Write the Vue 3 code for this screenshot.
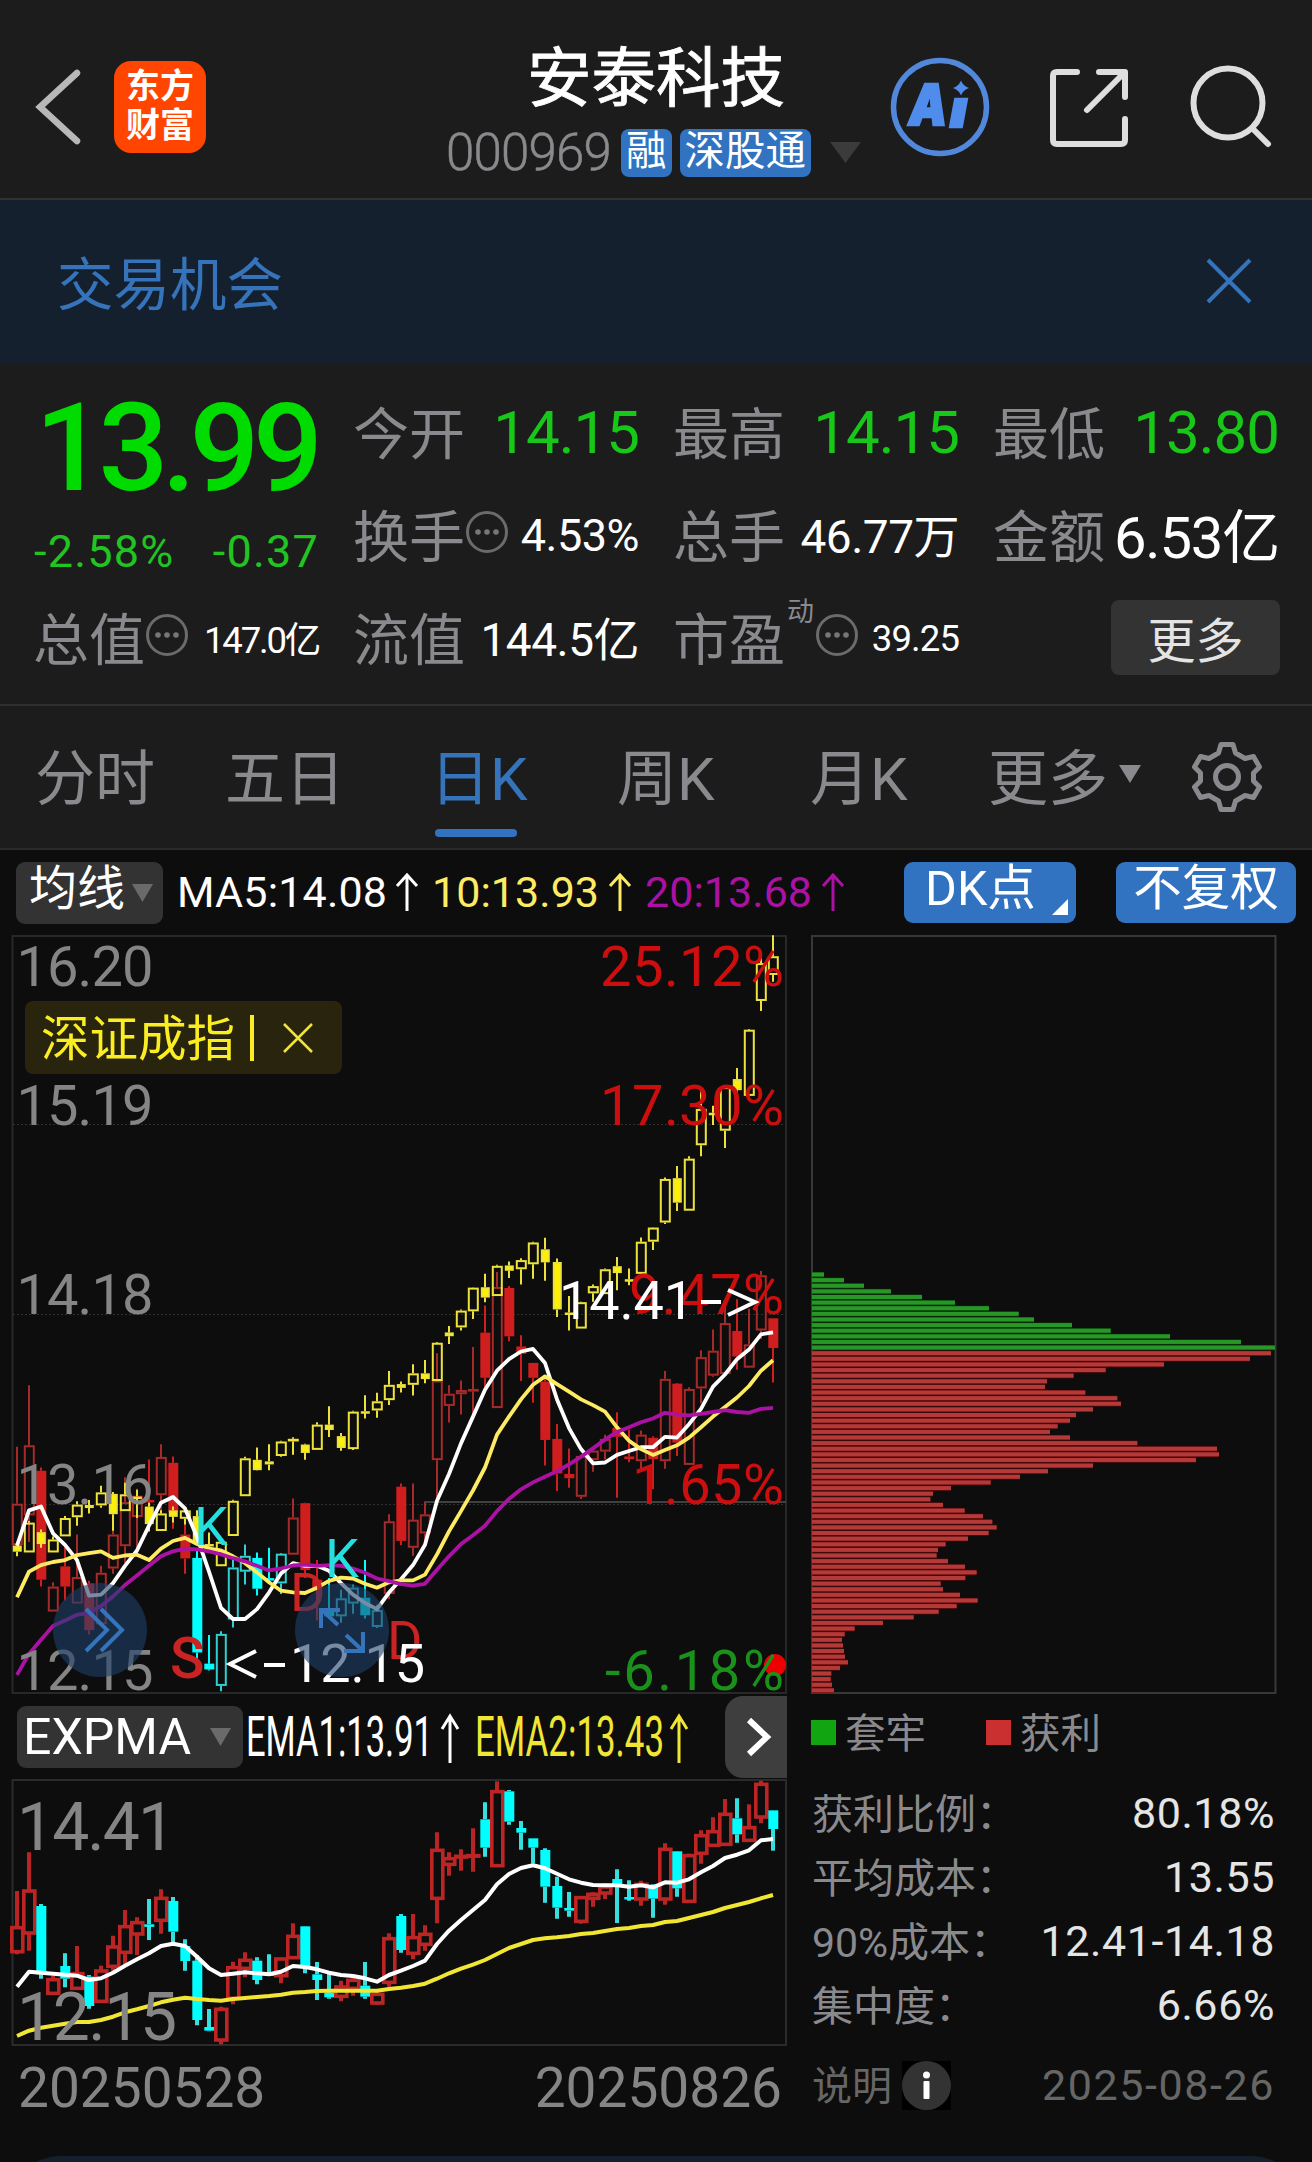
<template>
  <div class="page">
    <header class="header">
      <svg class="back" width="50" height="80" viewBox="0 0 50 80">
        <path d="M44 6 L7 40 L44 74" fill="none" stroke="#b8b8b8" stroke-width="6.500" stroke-linecap="round" />
      </svg>
      <div class="logo"><span>东方</span><span>财富</span></div>
      <div class="stock">
        <h1>安泰科技</h1>
        <div class="stock-sub">
          <span class="code">000969</span>
          <span class="tag">融</span>
          <span class="tag">深股通</span>
          <svg width="32" height="22" viewBox="0 0 32 22"><path d="M0 0 H31 L15.500 21 Z" fill="#3b3b3b" /></svg>
        </div>
      </div>
      <div class="header-icons">
        <svg width="100" height="100" viewBox="0 0 100 100">
          <circle cx="50" cy="50" r="46.500" fill="none" stroke="#5188dc" stroke-width="5.500" />
          <g fill="#508cec" stroke="#508cec" stroke-width="2.500" font-family="Inter" font-weight="900" font-style="italic">
            <text x="19" y="67.500" font-size="57" textLength="38" lengthAdjust="spacingAndGlyphs">A</text>
            <text x="60" y="70" font-size="52" textLength="17" lengthAdjust="spacingAndGlyphs">ı</text>
          </g>
          <path d="M71 23.500 Q73 29 79 31 Q73 33 71 38.500 Q69 33 63 31 Q69 29 71 23.500 Z" fill="#508cec" />
        </svg>
        <svg width="80" height="80" viewBox="0 0 80 80" fill="none" stroke="#dedede" stroke-width="6" stroke-linecap="round" stroke-linejoin="round">
          <path d="M28 5 H8 Q4 5 4 9 V73 Q4 77 8 77 H72 Q76 77 76 73 V52" />
          <path d="M50 5 H76 V30 M74 7 L38 43" />
        </svg>
        <svg width="84" height="84" viewBox="0 0 84 84" fill="none" stroke="#dedede" stroke-width="6" stroke-linecap="round">
          <circle cx="38" cy="38" r="34.500" />
          <path d="M63 64 L78 79" />
        </svg>
      </div>
    </header>

    <div v-if="bannerOpen" class="banner">
      <span>交易机会</span>
      <svg width="46" height="46" viewBox="0 0 46 46" @click="bannerOpen = false">
        <path d="M2 2 L44 44 M44 2 L2 44" stroke="#3573bb" stroke-width="4" />
      </svg>
    </div>

    <section class="quote">
      <div class="price">
        <div class="price-now">13.99</div>
        <div class="price-diff"><span>-2.58%</span><span>-0.37</span></div>
      </div>
      <div v-for="item in quotes" :key="item.label" class="cell">
        <span class="cell-label">{{ item.label }}</span>
        <sup v-if="item.sup">{{ item.sup }}</sup>
        <svg v-if="item.dots" class="dots" :class="{ shifted: item.sup }" width="44" height="44" viewBox="0 0 44 44">
          <circle cx="22" cy="22" r="19.500" fill="none" stroke="#6b6b6b" stroke-width="3" />
          <circle v-for="x in [13, 22, 31]" :key="x" :cx="x" cy="22" r="2.800" fill="#77777b" />
        </svg>
        <span class="cell-value" :class="item.cls">{{ item.value }}</span>
      </div>
      <div class="cell"><button class="more">更多</button></div>
    </section>

    <nav class="tabs">
      <div
        v-for="tab in tabs"
        :key="tab"
        class="tab"
        :class="{ active: tab === activeTab }"
        @click="activeTab = tab"
      >
        {{ tab }}
        <svg v-if="tab === '更多'" width="22" height="18" viewBox="0 0 22 18"><path d="M0 0 H22 L11 18 Z" fill="#8a8a8e" /></svg>
      </div>
      <svg class="gear" width="72" height="72" viewBox="0 0 72 72" fill="none" stroke="#8a8a8e" stroke-width="5" stroke-linejoin="round">
        <path d="M30 3.500 H42 L44.500 12 L54 17.500 L62.500 15.500 L68.500 26 L62.500 32 V40 L68.500 46 L62.500 56.500 L54 54.500 L44.500 60 L42 68.500 H30 L27.500 60 L18 54.500 L9.500 56.500 L3.500 46 L9.500 40 V32 L3.500 26 L9.500 15.500 L18 17.500 L27.500 12 Z" />
        <circle cx="36" cy="36" r="11.500" />
      </svg>
    </nav>

    <main class="charts">
      <div class="toolbar">
        <button class="picker"><span>均线</span><svg width="21" height="18" viewBox="0 0 21 18"><path d="M0 0 H21 L10.500 18 Z" fill="#6a6a6a" /></svg></button>
        <svg class="ma" width="680" height="60" viewBox="176 861 680 60" font-size="43">
          <g v-for="m in averages" :key="m.text" :fill="m.color" :stroke="m.color">
            <text :x="m.x" y="904.500" :textLength="m.w" stroke="none">{{ m.text }}</text>
            <path :d="`M${m.arrow} 909 V874 M${m.arrow - 10} 884 L${m.arrow} 873 L${m.arrow + 10} 884`" fill="none" stroke-width="3" />
          </g>
        </svg>
        <button class="blue dk"><span>DK点</span><i></i></button>
        <button class="blue"><span>不复权</span></button>
      </div>

      <div class="columns">
        <div class="left">
          <svg class="kline" width="787" height="760" viewBox="0 935 787 760">
            <g fill="none" stroke="#303030">
              <rect x="12.500" y="936" width="773.500" height="757" stroke="#282828" stroke-width="2" />
              <path v-for="y in [1124.5, 1314.5, 1504.5]" :key="y" :d="`M13 ${y} H786`" stroke-dasharray="2 2" />
              <path d="M425 1502 H786" stroke="#404040" stroke-width="2" />
            </g>
            <g v-for="(c, i) in stock" :key="'s' + i" :stroke="mainColor(c, i)" :fill="mainColor(c, i)" stroke-width="2">
              <path :d="wick(i, c, mainY)" />
              <rect v-bind="body(i, c, mainY, 10, 9)" :fill="c[0] ? 'none' : mainColor(c, i)" />
            </g>
            <g v-for="(c, i) in index" :key="'i' + i" stroke="#ede23c" stroke-width="2">
              <path :d="wick(i, c, indexY)" />
              <rect v-bind="body(i, c, indexY, 10, 8)" :fill="c[0] ? 'none' : '#fff000'" />
            </g>
            <g fill="none" stroke-width="3.800" stroke-linejoin="round">
              <polyline :points="line(ma5, indexY)" stroke="#ffffff" />
              <polyline :points="line(ma10, indexY)" stroke="#fdeb64" />
              <polyline :points="line(ma20, indexY)" stroke="#ab12a4" />
            </g>
            <circle cx="775" cy="1665" r="11" fill="#ee0000" />
            <g font-size="56">
              <template v-for="a in axis" :key="a.price">
                <text x="16.500" :y="a.y" textLength="137" fill="#858585">{{ a.price }}</text>
                <text :x="a.x" :y="a.y" :textLength="784 - a.x" :fill="a.color">{{ a.pct }}</text>
              </template>
            </g>
            <g font-size="54">
              <g fill="#c92323">
                <text x="170" y="1678" font-size="57" font-weight="500">S</text>
                <text x="290" y="1611">D</text>
                <text x="387" y="1659">D</text>
              </g>
              <g fill="#25dede">
                <text x="194" y="1545">K</text>
                <text x="325" y="1577">K</text>
              </g>
              <g fill="#ffffff">
                <text x="559" y="1319" textLength="135">14.41</text>
                <text x="290" y="1682" textLength="135">12.15</text>
              </g>
              <path d="M701 1302 H721 M728 1290 L755 1302 L728 1315 M285 1665 H264 M256 1651 L230 1664 L256 1677" fill="none" stroke="#fff" stroke-width="4" />
            </g>
            <g fill="none" stroke="#3573bb" stroke-width="4">
              <circle cx="100" cy="1630" r="47" fill="#203f6a" fill-opacity="0.6" stroke="none" />
              <path d="M86 1609 L107 1630 L86 1651 M101 1609 L122 1630 L101 1651" />
              <circle cx="342" cy="1630" r="47" fill="#203f6a" fill-opacity="0.6" stroke="none" />
              <path d="M338 1625 L322 1610 M340 1610 H321 V1628 M346 1635 L362 1650 M363 1632 V1651 H344" />
            </g>
          </svg>
          <div class="overlay"><span>深证成指</span><i></i>
            <svg width="32" height="32" viewBox="0 0 32 32"><path d="M2 2 L30 30 M30 2 L2 30" stroke="#efe43a" stroke-width="2.500" /></svg>
          </div>

          <div class="expma">
            <button class="picker wide">EXPMA <svg width="21" height="18" viewBox="0 0 21 18"><path d="M0 0 H21 L10.500 18 Z" fill="#6a6a6a" /></svg></button>
            <svg width="470" height="70" viewBox="245 1700 470 70" font-size="55">
              <g v-for="m in emas" :key="m.text" :fill="m.color" :stroke="m.color">
                <text :x="m.x" y="1754" :textLength="m.w" lengthAdjust="spacingAndGlyphs" stroke="none">{{ m.text }}</text>
                <path :d="`M${m.arrow} 1761 V1715 M${m.arrow - 8} 1727 L${m.arrow} 1714 L${m.arrow + 8} 1727`" fill="none" stroke-width="3" />
              </g>
            </svg>
            <button class="next">
              <svg width="30" height="44" viewBox="0 0 30 44"><path d="M6 5 L24 22 L6 39" fill="none" stroke="#fff" stroke-width="6" /></svg>
            </button>
          </div>

          <svg class="kline" width="787" height="268" viewBox="0 1779 787 268">
            <rect x="12.500" y="1780" width="773.500" height="265" fill="none" stroke="#2b2b2b" stroke-width="2" />
            <g v-for="(c, i) in stock" :key="i" :stroke="c[0] ? '#b82424' : '#38dede'" stroke-width="4">
              <path :d="wick(i, c, subY)" />
              <rect v-bind="body(i, c, subY, 12, 9)" :fill="c[0] ? 'none' : '#00ffff'" :stroke="c[0] ? '#bd2424' : '#00ffff'" :stroke-width="c[0] ? 3.6 : 2" />
            </g>
            <g fill="none" stroke-width="4" stroke-linejoin="round">
              <polyline :points="line(ema1, subY)" stroke="#ffffff" />
              <polyline :points="line(ema2, subY)" stroke="#f2e635" />
            </g>
            <g font-size="66" fill="#858585">
              <text x="17" y="1850" textLength="158">14.41</text>
              <text x="17" y="2040" textLength="160">12.15</text>
            </g>
          </svg>
          <div class="dates"><span>20250528</span><span>20250826</span></div>
        </div>

        <aside class="right">
          <svg width="466" height="760" viewBox="811 935 466 760">
            <rect x="812" y="936" width="463.500" height="757" fill="none" stroke="#383838" stroke-width="2" />
            <g v-for="(w, i) in chips" :key="i">
              <rect x="812" :y="1272 + i * 5.62" :width="w / 3" height="5.200" :fill="i < 14 ? '#064406' : '#620a0a'" />
              <rect x="812" :y="1272.5 + i * 5.62" :width="w / 3" height="4" :fill="i < 14 ? '#289728' : '#b43a3a'" />
            </g>
          </svg>
          <div class="legend">
            <span class="locked">套牢</span>
            <span class="profit">获利</span>
          </div>
          <dl>
            <div v-for="row in costs" :key="row[0]"><dt>{{ row[0] }}</dt><dd>{{ row[1] }}</dd></div>
          </dl>
          <div class="note">
            <span class="note-label">说明</span>
            <svg width="49" height="49" viewBox="0 0 49 49">
              <rect width="49" height="49" fill="#000" />
              <circle cx="24.500" cy="24.500" r="24.500" fill="#333" />
              <circle cx="24.500" cy="14" r="3.500" fill="#fff" />
              <rect x="21.500" y="20" width="6" height="18" rx="1" fill="#fff" />
            </svg>
            <span class="note-date">2025-08-26</span>
          </div>
        </aside>
      </div>
      <div class="sheet"></div>
    </main>
  </div>
</template>

<script setup>
import { ref } from 'vue'

const bannerOpen = ref(true)
const activeTab = ref('日K')
const tabs = ['分时', '五日', '日K', '周K', '月K', '更多']

const quotes = [
  { label: '今开', value: '14.15', cls: 'green' },
  { label: '最高', value: '14.15', cls: 'green' },
  { label: '最低', value: '13.80', cls: 'green' },
  { label: '换手', value: '4.53%', cls: 'm', dots: true },
  { label: '总手', value: '46.77万', cls: 'l' },
  { label: '金额', value: '6.53亿', cls: 'xl' },
  { label: '总值', value: '147.0亿', cls: 's', dots: true },
  { label: '流值', value: '144.5亿', cls: 'l' },
  { label: '市盈', value: '39.25', cls: 's wider', dots: true, sup: '动' }
]

const averages = [
  { text: 'MA5:14.08', x: 177, w: 210, arrow: 407, color: '#ffffff' },
  { text: '10:13.93', x: 432, w: 167, arrow: 620, color: '#fdeb64' },
  { text: '20:13.68', x: 645, w: 167, arrow: 833, color: '#ab12a4' }
]
const emas = [
  { text: 'EMA1:13.91', x: 246, w: 187, arrow: 450, color: '#ffffff' },
  { text: 'EMA2:13.43', x: 475, w: 189, arrow: 679, color: '#f2e635' }
]
const axis = [
  { price: '16.20', pct: '25.12%', x: 600, y: 986, color: '#cc0e0e' },
  { price: '15.19', pct: '17.30%', x: 600, y: 1125, color: '#cc0e0e' },
  { price: '14.18', pct: '9.47%', x: 629, y: 1313.5, color: '#cc0e0e' },
  { price: '13.16', pct: '1.65%', x: 632, y: 1503.5, color: '#cc0e0e' },
  { price: '12.15', pct: '-6.18%', x: 605, y: 1689.5, color: '#1a911a' }
]
const costs = [
  ['获利比例：', '80.18%'],
  ['平均成本：', '13.55'],
  ['90%成本：', '12.41-14.18'],
  ['集中度：', '6.66%']
]

// [rising, high, body top, body bottom, low]
const stock = [
  [1, 393, 500, 578, 583], [1, 277, 390, 522, 572], [0, 432, 438, 643, 656], [1, 648, 656, 703, 703],
  [0, 580, 618, 656, 682], [1, 558, 638, 688, 688], [0, 645, 650, 738, 746], [1, 617, 630, 727, 727],
  [1, 527, 558, 622, 632], [1, 450, 497, 580, 612], [1, 472, 485, 525, 585], [0, 417, 493, 497, 540],
  [1, 388, 412, 484, 521], [0, 411, 423, 515, 547], [0, 538, 558, 603, 632], [0, 585, 602, 780, 796],
  [0, 747, 801, 812, 814], [1, 740, 745, 843, 853], [1, 605, 620, 718, 733], [1, 577, 598, 628, 652],
  [0, 592, 602, 660, 673], [0, 583, 640, 644, 645], [1, 593, 594, 650, 670], [1, 490, 526, 596, 596],
  [0, 498, 499, 625, 640], [0, 606, 643, 660, 720], [0, 640, 698, 712, 716], [1, 662, 678, 712, 724],
  [1, 652, 658, 688, 707], [0, 606, 677, 710, 716], [1, 690, 700, 732, 734], [1, 520, 533, 670, 680],
  [0, 462, 468, 570, 578], [1, 462, 530, 583, 598], [1, 496, 520, 556, 572], [1, 217, 268, 418, 490],
  [1, 277, 293, 316, 347], [1, 268, 286, 294, 332], [1, 205, 284, 289, 335], [0, 127, 178, 263, 290],
  [1, 64, 92, 320, 320], [0, 90, 94, 185, 194], [0, 183, 204, 218, 269], [0, 235, 235, 263, 310],
  [0, 265, 270, 380, 428], [0, 350, 378, 443, 476], [0, 396, 444, 452, 470], [1, 408, 410, 487, 491],
  [1, 397, 400, 418, 440], [1, 370, 378, 402, 417], [0, 328, 357, 374, 489], [0, 361, 411, 416, 422],
  [1, 362, 370, 420, 437], [0, 373, 376, 416, 473], [1, 250, 265, 420, 434], [0, 273, 274, 385, 410],
  [1, 281, 284, 427, 427], [1, 211, 224, 283, 311], [1, 172, 212, 259, 261], [1, 117, 160, 256, 256],
  [0, 115, 175, 223, 248], [1, 133, 200, 244, 244], [1, 62, 70, 174, 190], [0, 151, 151, 207, 272]
]
const index = [
  [0, 1105, 1112, 1128, 1140], [1, 1048, 1052, 1130, 1130], [0, 1070, 1077, 1108, 1118], [1, 1088, 1096, 1130, 1130],
  [1, 1035, 1040, 1088, 1088], [1, 996, 1005, 1038, 1060], [0, 993, 1006, 1014, 1028], [1, 956, 973, 1007, 1013],
  [0, 972, 977, 1030, 1073], [1, 948, 978, 1022, 1022], [0, 966, 984, 990, 1040], [0, 1000, 1010, 1056, 1075],
  [1, 1020, 1028, 1074, 1074], [0, 1010, 1020, 1037, 1052], [1, 1018, 1020, 1042, 1057], [0, 1020, 1035, 1100, 1110],
  [0, 1078, 1108, 1114, 1122], [1, 1095, 1102, 1166, 1166], [1, 992, 995, 1087, 1087], [1, 880, 884, 983, 983],
  [0, 856, 888, 915, 916], [0, 847, 892, 900, 915], [1, 838, 840, 878, 880], [1, 829, 833, 840, 875],
  [0, 846, 848, 870, 888], [1, 790, 796, 862, 862], [0, 748, 796, 810, 828], [0, 818, 826, 857, 864],
  [1, 760, 762, 860, 862], [0, 719, 761, 764, 780], [1, 713, 735, 759, 778], [1, 656, 692, 732, 745],
  [0, 683, 690, 700, 712], [1, 638, 662, 692, 720], [0, 627, 662, 677, 688], [1, 580, 582, 682, 682],
  [0, 538, 555, 565, 585], [1, 495, 498, 542, 550], [1, 437, 438, 500, 520], [0, 402, 437, 464, 476],
  [1, 378, 381, 460, 460], [0, 370, 380, 394, 413], [1, 361, 366, 390, 430], [1, 318, 320, 377, 415],
  [0, 308, 338, 372, 420], [0, 362, 371, 495, 515], [0, 460, 503, 506, 550], [1, 475, 476, 545, 545],
  [1, 430, 434, 453, 475], [1, 388, 390, 455, 455], [0, 358, 382, 400, 445], [0, 388, 416, 419, 432],
  [1, 307, 318, 402, 402], [1, 280, 281, 318, 340], [1, 150, 154, 268, 272], [0, 120, 152, 216, 238],
  [1, 95, 101, 237, 237], [1, -78, -29, 66, 95], [0, -37, -19, -16, 13], [1, -91, -86, 28, 73],
  [0, -136, -107, -78, -44], [1, -238, -236, -63, -63], [1, -431, -410, -311, -285], [1, -483, -428, -379, -361]
]

const ma5 = [1112, 1020, 1010, 1080, 1110, 1150, 1243, 1240, 1210, 1165, 1125, 1060, 1000, 985, 1015, 1090, 1180, 1275, 1304, 1304, 1278, 1235, 1185, 1158, 1165, 1165, 1178, 1210, 1240, 1262, 1278, 1235, 1200, 1163, 1110, 995, 925, 845, 775, 705, 655, 625, 605, 598, 635, 730, 805, 860, 897, 895, 875, 865, 855, 855, 828, 830, 795, 755, 697, 665, 625, 600, 560, 555]
const ma10 = [1247, 1180, 1163, 1155, 1150, 1137, 1132, 1127, 1144, 1138, 1136, 1150, 1120, 1100, 1092, 1108, 1120, 1125, 1140, 1158, 1182, 1208, 1230, 1234, 1236, 1222, 1204, 1196, 1198, 1212, 1222, 1208, 1203, 1203, 1188, 1135, 1075, 1022, 968, 908, 822, 775, 730, 692, 670, 690, 710, 730, 745, 762, 803, 838, 860, 875, 862, 850, 830, 803, 775, 750, 725, 695, 655, 628]
const ma20 = [1450, 1395, 1358, 1322, 1308, 1293, 1288, 1270, 1245, 1215, 1190, 1165, 1140, 1127, 1120, 1122, 1127, 1135, 1145, 1153, 1165, 1177, 1172, 1164, 1162, 1165, 1163, 1165, 1172, 1183, 1198, 1205, 1213, 1217, 1212, 1175, 1140, 1108, 1085, 1060, 1022, 990, 965, 947, 932, 918, 900, 880, 858, 835, 815, 803, 790, 780, 765, 770, 772, 768, 763, 758, 763, 765, 755, 752]
const ema1 = [680, 635, 638, 641, 644, 647, 660, 655, 638, 617, 598, 580, 558, 551, 558, 590, 625, 645, 641, 637, 640, 643, 635, 618, 621, 628, 638, 645, 648, 655, 665, 645, 632, 618, 602, 552, 512, 480, 450, 420, 373, 342, 324, 316, 325, 341, 358, 368, 375, 376, 376, 380, 376, 382, 367, 368, 358, 337, 318, 294, 284, 271, 241, 237]
const ema2 = [828, 812, 803, 797, 791, 786, 786, 780, 770, 757, 748, 738, 727, 719, 713, 717, 720, 722, 717, 714, 711, 708, 704, 698, 696, 693, 692, 692, 692, 692, 692, 687, 683, 678, 671, 656, 640, 626, 614, 600, 582, 564, 552, 540, 535, 532, 528, 522, 519, 513, 507, 504, 498, 495, 486, 483, 474, 465, 456, 444, 435, 426, 415, 405]

// first 14 are above the current price
const chips = [
  36, 96, 156, 237, 330, 429, 531, 620, 666, 780, 896, 1074, 1287, 1389,
  1377, 1314, 1056, 881, 785, 705, 699, 820, 916, 927, 843, 792, 774, 737, 714, 774, 976, 1215, 1221, 1152, 843, 708, 624, 536,
  417, 363, 355, 393, 458, 513, 541, 554, 530, 468, 401, 378, 374, 408, 459, 494, 460, 386, 393, 444, 497, 434, 380, 305, 213,
  128, 98, 90, 93, 96, 99, 108, 84, 58, 56, 60, 66
]

const candleX = (i) => 17 + i * 12
const subY = (v) => 1760 + v / 3
const mainY = (v) => 1271 + (v - 62) * 0.5313
const indexY = (v) => 1120 + v / 2.613

function mainColor(c, i) {
  if ((i >= 15 && i <= 22) || (i >= 26 && i <= 30)) return c[0] ? '#2fcfd2' : '#00ffff'
  return c[0] ? '#a52b2a' : '#d01e1e'
}

function wick(i, c, y) {
  const x = candleX(i)
  return `M${x} ${y(c[1])} V${y(c[2])} M${x} ${y(c[3])} V${y(c[4])}`
}

function body(i, c, y, hollow, solid) {
  const w = (c[0] ? hollow : solid) - 1
  return {
    x: candleX(i) + 0.3 - w / 2,
    y: y(c[2]) + 1,
    width: w,
    height: Math.max(y(c[3]) - y(c[2]) - 2, 0.5)
  }
}

function line(list, y) {
  return list.map((v, i) => `${candleX(i)},${y(v).toFixed(1)}`).join(' ')
}
</script>

<style>
body {
  margin: 0;
  background: #0d0d0d;
}
</style>

<style scoped>
.page {
  width: 1312px;
  height: 2162px;
  overflow: hidden;
  background: #1c1c1c;
  color: #fff;
  font-family: Roboto, 'Noto Sans CJK SC', sans-serif;
}

svg {
  display: block;
  flex: none;
  overflow: visible;
}

button {
  display: flex;
  align-items: center;
  justify-content: center;
  border: 0;
  padding: 0;
  margin: 0;
  color: #fff;
  font-family: inherit;
  box-sizing: border-box;
  white-space: nowrap;
}
button span {
  line-height: 60px;
  padding-bottom: 8px;
}

.header {
  display: grid;
  grid-template-columns: 114px 92px 1fr auto;
  align-items: center;
  height: 200px;
  padding-right: 38px;
  padding-top: 15px;
  box-sizing: border-box;
  border-bottom: 2px solid #303234;
}
.back {
  margin-left: 33px;
}
.logo {
  display: flex;
  flex-direction: column;
  justify-content: center;
  align-items: center;
  height: 92px;
  padding-bottom: 2px;
  box-sizing: border-box;
  border-radius: 17px;
  background: #ff4500;
  font-size: 34px;
  line-height: 39px;
  font-weight: 700;
}
.stock {
  margin-left: 240px;
  margin-top: 8px;
}
h1 {
  margin: 0 0 0 81px;
  font-size: 64.500px;
  line-height: 80px;
  font-weight: 400;
  -webkit-text-stroke: 0.800px #fff;
}
.stock-sub {
  display: flex;
  align-items: center;
  height: 60px;
  margin-top: 4px;
}
.code {
  width: 175px;
  font-size: 51px;
  letter-spacing: -0.800px;
  font-weight: 300;
  -webkit-text-stroke: 0.500px #8a8a8e;
  color: #8a8a8e;
}
.tag {
  height: 48px;
  margin-right: 8px;
  padding: 0 5px;
  border-radius: 8px;
  background: #3173c0;
  font-size: 40.500px;
  line-height: 45px;
}
.stock-sub svg {
  margin-left: 11px;
}
.header-icons {
  display: flex;
  align-items: center;
  gap: 59px;
}
.header-icons svg:last-child {
  margin-left: 2px;
}

.banner {
  display: flex;
  align-items: center;
  justify-content: space-between;
  height: 164px;
  padding: 0 60px 0 57px;
  box-sizing: border-box;
  background: #14202e;
  color: #3573bb;
  font-size: 56.500px;
}
.banner span {
  padding-bottom: 5px;
}
.banner svg {
  margin-bottom: 2px;
}

.quote {
  display: grid;
  grid-template-columns: repeat(4, 285px);
  grid-template-rows: repeat(3, 103px);
  column-gap: 35px;
  height: 342px;
  padding: 17px 34px 0;
  box-sizing: border-box;
  border-bottom: 2px solid #303030;
}
.price {
  grid-row: span 2;
}
.price-now {
  height: 130px;
  padding-left: 1px;
  font-size: 123px;
  line-height: 134px;
  font-weight: 500;
  letter-spacing: -6.500px;
  color: #00dc00;
}
.price-diff {
  display: flex;
  justify-content: space-between;
  margin-top: 13px;
  font-size: 45px;
  line-height: 56px;
  letter-spacing: 1.200px;
  color: #22c422;
}
.cell {
  display: flex;
  align-items: center;
  position: relative;
}
.cell-label {
  margin-left: -1px;
  padding-bottom: 6px;
  font-size: 56px;
  color: #8a8a8e;
}
.cell-value {
  margin-left: auto;
  white-space: nowrap;
}
.green {
  color: #18c818;
  font-size: 60px;
  letter-spacing: -1px;
}
.m {
  font-size: 45px;
  letter-spacing: -0.500px;
}
.l {
  padding-bottom: 5px;
  font-size: 46px;
  letter-spacing: -0.500px;
}
.xl {
  padding-bottom: 6px;
  font-size: 58px;
  letter-spacing: -1.200px;
}
.s {
  padding-bottom: 2px;
  font-size: 36.500px;
  letter-spacing: -2.200px;
}
.wider {
  padding-bottom: 0;
  letter-spacing: -0.900px;
}
.dots {
  margin-left: 0;
  margin-top: -7px;
}
.dots.shifted {
  margin-left: 30px;
}
sup {
  position: absolute;
  left: 113px;
  top: 9px;
  font-size: 27px;
  line-height: 32px;
  color: #8a8a8e;
}
.more {
  width: 169px;
  height: 75px;
  margin-left: auto;
  margin-right: -1px;
  margin-bottom: 3px;
  border-radius: 8px;
  background: #333;
  color: #e4e4e4;
  font-size: 48px;
}

.tabs {
  display: grid;
  grid-template-columns: 192px 207px 183px 193px 178px 203px 1fr;
  height: 144px;
  padding-left: 35px;
  box-sizing: border-box;
  border-bottom: 2px solid #2a2a2a;
}
.tab {
  display: flex;
  align-items: center;
  gap: 11px;
  position: relative;
  padding-bottom: 7px;
  font-size: 60px;
  color: #8a8a8e;
}
.tab:nth-child(2) {
  margin-left: -2px;
}
.tab.active {
  margin-left: -4px;
  color: #3573bb;
}
.tab.active::after {
  content: '';
  position: absolute;
  left: 5px;
  bottom: 11px;
  width: 82px;
  height: 8px;
  border-radius: 4px;
  background: #3173c0;
}
.gear {
  align-self: center;
}

.charts {
  background: #0d0d0d;
}
.toolbar {
  display: flex;
  align-items: center;
  height: 85px;
  padding: 0 16px;
}
.picker {
  justify-content: flex-start;
  gap: 7px;
  width: 147px;
  height: 62px;
  padding-left: 13px;
  border-radius: 9px;
  background: #333;
  font-size: 48px;
}
.picker.wide {
  width: 226px;
  gap: 19px;
  padding-left: 6px;
  font-size: 50px;
}
.ma {
  margin-left: 13px;
}
.blue {
  width: 180px;
  height: 61px;
  border-radius: 9px;
  background: #3173c0;
  font-size: 48.500px;
}
.dk {
  position: relative;
  width: 172px;
  margin-left: 48px;
  margin-right: 40px;
  padding-right: 19px;
}
.dk i {
  position: absolute;
  right: 8px;
  bottom: 8px;
  border-left: 16px solid transparent;
  border-bottom: 16px solid #fff;
}

.columns {
  display: flex;
}
.left {
  position: relative;
  width: 787px;
  margin-right: 24px;
}
.overlay {
  display: flex;
  align-items: center;
  position: absolute;
  left: 25px;
  top: 66px;
  width: 317px;
  height: 73px;
  padding-left: 16px;
  box-sizing: border-box;
  border-radius: 8px;
  background: #28240e;
  color: #faee22;
  font-size: 48.500px;
}
.overlay span {
  padding-bottom: 6px;
}
.overlay i {
  width: 4px;
  height: 46px;
  margin: 0 28px 0 15px;
  background: #faee22;
}
.expma {
  display: flex;
  align-items: center;
  height: 84px;
  padding-left: 17px;
}
.expma > svg {
  margin-left: 2px;
}
.next {
  justify-content: flex-start;
  width: 62px;
  height: 82px;
  margin-left: auto;
  padding-left: 18px;
  border-radius: 18px 0 0 18px;
  background: #3e3e3e;
}
.dates {
  display: flex;
  justify-content: space-between;
  padding: 8px 5px 0 18px;
  font-size: 55px;
  line-height: 66px;
  color: #858585;
}

.right {
  width: 464px;
}
.legend {
  display: flex;
  gap: 60px;
  height: 71px;
  padding-bottom: 6px;
  align-items: center;
  color: #8a8a8e;
  font-size: 40.500px;
}
.legend span {
  display: flex;
  align-items: center;
  gap: 9px;
}
.legend span::before {
  content: '';
  width: 25px;
  height: 25px;
  margin-top: 3px;
  background: #12a512;
}
.legend .profit::before {
  background: #cb3031;
}
dl {
  margin: 9px 0 0;
}
dl div {
  display: flex;
  justify-content: space-between;
  align-items: center;
  height: 64px;
  font-size: 41px;
}
dt {
  padding-left: 1px;
  padding-bottom: 5px;
  color: #8a8a8e;
}
dd {
  margin: 0;
  font-size: 43px;
  letter-spacing: 0.600px;
  color: #e5e5e5;
}
.note {
  display: flex;
  align-items: center;
  height: 50px;
  margin-top: 23px;
  padding-left: 1px;
  font-size: 40px;
  color: #666;
}
.note-label {
  padding-bottom: 5px;
}
.note svg {
  margin-left: 10px;
}
.note-date {
  margin-left: auto;
  font-size: 43px;
  letter-spacing: 1.600px;
}
.sheet {
  height: 100px;
  margin: 35px 10px 0;
  border-radius: 60px;
  background: #14202e;
}
</style>
